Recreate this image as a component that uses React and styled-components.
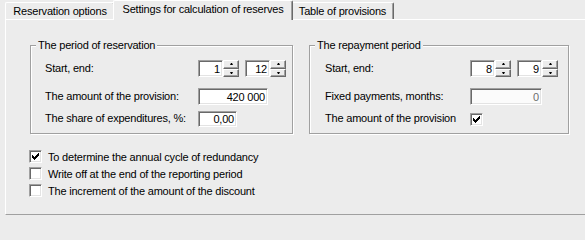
import React from "react";
import styled, { createGlobalStyle } from "styled-components";

const Global = createGlobalStyle`
  html, body { margin: 0; padding: 0; background: #ececec; }
`;

const Root = styled.div`
  width: 585px;
  height: 215px;
  overflow: hidden;
  background: #ececec;
  font-family: "Liberation Sans", Arial, sans-serif;
  font-size: 11px;
  letter-spacing: -0.2px;
  color: #000;
`;

const TabStrip = styled.div`
  display: flex;
  align-items: flex-end;
  height: 19px;
  padding-left: 5px;
  position: relative;
  z-index: 1;
`;

const Tab = styled.div`
  box-sizing: border-box;
  width: ${(p) => p.$w}px;
  height: ${(p) => (p.$active ? 20 : 17)}px;
  margin: 0 ${(p) => (p.$active ? -2 : 0)}px ${(p) => (p.$active ? -1 : 0)}px;
  padding-bottom: ${(p) => (p.$active ? 3 : 1)}px;
  display: flex;
  align-items: center;
  justify-content: center;
  background: #ececec;
  border-top: 1px solid #fff;
  border-left: 1px solid #fff;
  border-right: 1px solid #696969;
  box-shadow: inset -1px 0 0 #a0a0a0;
  border-radius: 2px 2px 0 0;
  position: relative;
  z-index: ${(p) => (p.$active ? 2 : 1)};
  white-space: nowrap;
`;

const Panel = styled.div`
  box-sizing: border-box;
  margin-left: 5px;
  width: 600px;
  height: 196px;
  border-top: 1px solid #fff;
  border-left: 1px solid #fff;
  border-bottom: 1px solid #a0a0a0;
  padding: 25px 0 0 24px;
`;

const GroupsRow = styled.div`
  display: flex;
  gap: 16px;
`;

const Group = styled.div`
  position: relative;
  box-sizing: border-box;
  width: ${(p) => p.$w}px;
  height: 89px;
  border: 1px solid #a0a0a0;
  box-shadow: inset 1px 1px 0 #fff, 1px 1px 0 #fff;
  padding: 14px 0 0 ${(p) => p.$pl}px;
`;

const GroupTitle = styled.span`
  position: absolute;
  top: -7px;
  left: 5px;
  padding: 0 2px;
  line-height: 13px;
  background: #ececec;
  white-space: nowrap;
`;

const Row = styled.div`
  display: grid;
  grid-template-columns: ${(p) => p.$lw}px auto;
  align-items: center;
  height: ${(p) => p.$h}px;
  margin-top: ${(p) => p.$mt || 0}px;
`;

const Label = styled.span`
  white-space: nowrap;
  padding-bottom: 2px;
`;

const Controls = styled.div`
  display: flex;
  gap: 6px;
`;

const Spinner = styled.div`
  display: flex;
  height: 17px;
`;

const Edit = styled.div`
  box-sizing: border-box;
  width: ${(p) => p.$w}px;
  height: ${(p) => p.$h || 17}px;
  background: ${(p) => (p.$disabled ? "#fbfbfb" : "#fff")};
  color: ${(p) => (p.$disabled ? "#6d6d6d" : "#000")};
  border-top: 1px solid #a0a0a0;
  border-left: 1px solid #a0a0a0;
  border-bottom: 1px solid #fff;
  border-right: 1px solid #fff;
  box-shadow: inset 1px 1px 0 #696969, inset -1px -1px 0 #e3e3e3;
  display: flex;
  align-items: center;
  justify-content: flex-end;
  padding: 0 2px 0 0;
  white-space: nowrap;
`;

const SpinCol = styled.div`
  display: flex;
  flex-direction: column;
  width: 16px;
  height: 17px;
`;

const SpinBtn = styled.div`
  flex: 1;
  box-sizing: border-box;
  background: #ececec;
  border-top: 1px solid #fff;
  border-left: 1px solid #fff;
  border-right: 1px solid #696969;
  border-bottom: 1px solid #696969;
  box-shadow: inset -1px -1px 0 #a0a0a0;
  display: flex;
  align-items: center;
  justify-content: center;
`;

const Arrow = styled.span`
  width: 1px;
  height: 0;
  border-left: 1px solid transparent;
  border-right: 1px solid transparent;
  ${(p) =>
    p.$down
      ? "border-top: 2px solid #000;"
      : "border-bottom: 2px solid #000;"}
`;

const Box = styled.span`
  box-sizing: border-box;
  width: 13px;
  height: 13px;
  background: #fff;
  border-top: 1px solid #a0a0a0;
  border-left: 1px solid #a0a0a0;
  border-bottom: 1px solid #fff;
  border-right: 1px solid #fff;
  box-shadow: inset 1px 1px 0 #696969, inset -1px -1px 0 #e3e3e3;
  display: flex;
  align-items: center;
  justify-content: center;
  flex: none;
`;

const CheckList = styled.div`
  display: flex;
  flex-direction: column;
  margin-top: 14px;
  margin-left: -1px;
`;

const CheckRow = styled.div`
  display: flex;
  align-items: center;
  gap: 6px;
  height: 17px;
  white-space: nowrap;
`;

const Mark = () => (
  <svg width="7" height="7" viewBox="0 0 7 7" shapeRendering="crispEdges">
    <path
      fill="#000"
      d="M6 0h1v1h-1z M5 1h2v1h-2z M0 2h1v1h-1z M4 2h3v1h-3z M0 3h2v1h-2z M3 3h3v1h-3z M0 4h5v1h-5z M1 5h3v1h-3z M2 6h1v1h-1z"
    />
  </svg>
);

const Check = ({ checked }) => <Box>{checked && <Mark />}</Box>;

const Spin = ({ value, w = 25 }) => (
  <Spinner>
    <Edit $w={w}>{value}</Edit>
    <SpinCol>
      <SpinBtn>
        <Arrow />
      </SpinBtn>
      <SpinBtn>
        <Arrow $down />
      </SpinBtn>
    </SpinCol>
  </Spinner>
);

export default function App() {
  return (
    <Root>
      <Global />
      <TabStrip>
        <Tab $w={110}>Reservation options</Tab>
        <Tab $w={180} $active>
          Settings for calculation of reserves
        </Tab>
        <Tab $w={103}>Table of provisions</Tab>
      </TabStrip>
      <Panel>
        <GroupsRow>
          <Group $w={263} $pl={14}>
            <GroupTitle>The period of reservation</GroupTitle>
            <Row $lw={153} $h={17}>
              <Label>Start, end:</Label>
              <Controls>
                <Spin value="1" />
                <Spin value="12" />
              </Controls>
            </Row>
            <Row $lw={153} $h={17} $mt={11}>
              <Label>The amount of the provision:</Label>
              <Edit $w={70}>420 000</Edit>
            </Row>
            <Row $lw={153} $h={16} $mt={6}>
              <Label>The share of expenditures, %:</Label>
              <Edit $w={39} $h={16}>
                0,00
              </Edit>
            </Row>
          </Group>
          <Group $w={260} $pl={15}>
            <GroupTitle>The repayment period</GroupTitle>
            <Row $lw={145} $h={17}>
              <Label>Start, end:</Label>
              <Controls>
                <Spin value="8" />
                <Spin value="9" />
              </Controls>
            </Row>
            <Row $lw={145} $h={17} $mt={11}>
              <Label>Fixed payments, months:</Label>
              <Edit $w={72} $disabled>
                0
              </Edit>
            </Row>
            <Row $lw={145} $h={16} $mt={6}>
              <Label>The amount of the provision</Label>
              <Check checked />
            </Row>
          </Group>
        </GroupsRow>
        <CheckList>
          <CheckRow>
            <Check checked />
            To determine the annual cycle of redundancy
          </CheckRow>
          <CheckRow>
            <Check />
            Write off at the end of the reporting period
          </CheckRow>
          <CheckRow>
            <Check />
            The increment of the amount of the discount
          </CheckRow>
        </CheckList>
      </Panel>
    </Root>
  );
}
